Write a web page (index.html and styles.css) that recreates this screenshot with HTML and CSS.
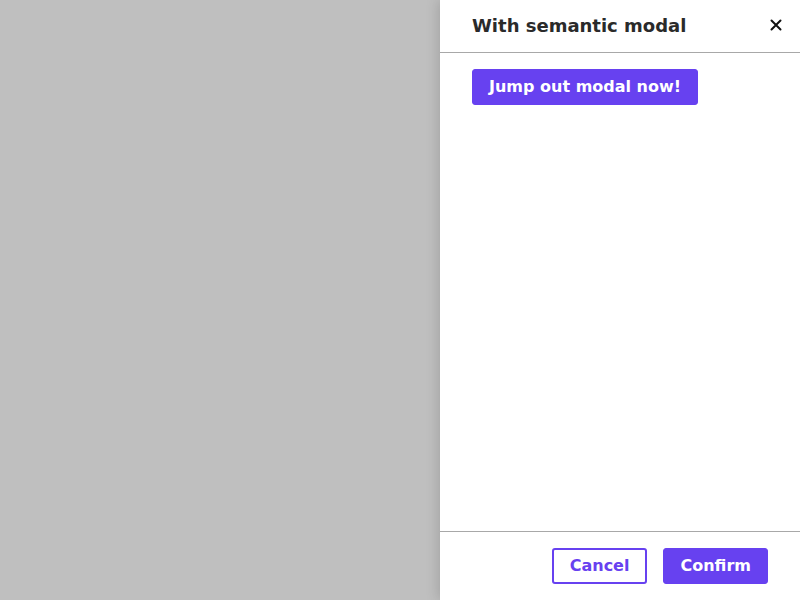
FILE: index.html
```html
<!DOCTYPE html>
<html>
<head>
<meta charset="utf-8">
<link rel="stylesheet" href="styles.css">
</head>
<body>
<div class="overlay">
  <aside class="drawer" role="dialog" aria-modal="true">
    <header class="drawer-header">
      <h2 class="drawer-title">With semantic modal</h2>
      <button class="close-btn" aria-label="Close">
        <svg width="12" height="12" viewBox="0 0 12 12"><path d="M1.5 1.5 L10.5 10.5 M10.5 1.5 L1.5 10.5" stroke="#111" stroke-width="2" stroke-linecap="round"/></svg>
      </button>
    </header>
    <div class="drawer-body">
      <button class="btn btn-primary">Jump out modal now!</button>
    </div>
    <footer class="drawer-footer">
      <button class="btn btn-outline">Cancel</button>
      <button class="btn btn-primary">Confirm</button>
    </footer>
  </aside>
</div>
</body>
</html>
```
FILE: styles.css
```css
* { box-sizing: border-box; }
html, body { margin: 0; height: 100%; }
body { font-family: "DejaVu Sans", sans-serif; background: #fff; }
.overlay {
  height: 100vh;
  background: #bfbfbf;
  display: flex;
  justify-content: flex-end;
}
.drawer {
  width: 360px;
  height: 100%;
  background: #fff;
  display: flex;
  flex-direction: column;
  box-shadow: -2px 0 12px rgba(0,0,0,0.15);
}
.drawer-header {
  height: 53px;
  border-bottom: 1px solid #a8a8a8;
  display: flex;
  align-items: center;
  justify-content: space-between;
  padding: 0 18px 2px 32px;
}
.drawer-title {
  margin: 0;
  font-size: 18px;
  font-weight: bold;
  color: #2a2a2a;
}
.close-btn {
  border: 0;
  background: none;
  padding: 0;
  width: 12px;
  height: 12px;
  margin-top: -1px;
  display: flex;
  cursor: pointer;
}
.drawer-body {
  flex: 1;
  padding: 16px 32px;
}
.drawer-footer {
  border-top: 1px solid #a8a8a8;
  display: flex;
  justify-content: flex-end;
  gap: 16px;
  padding: 16px 32px 16px;
  height: 69px;
}
.btn {
  font-family: "DejaVu Sans", sans-serif;
  font-weight: bold;
  font-size: 16px;
  height: 36px;
  padding: 0 16px 1px;
  border-radius: 3px;
  cursor: pointer;
}
.btn-primary {
  background: #6741f0;
  color: #fff;
  border: 1px solid #6741f0;
}
.btn-outline {
  background: #fff;
  color: #6741f0;
  border: 2px solid #6741f0;
}
```
